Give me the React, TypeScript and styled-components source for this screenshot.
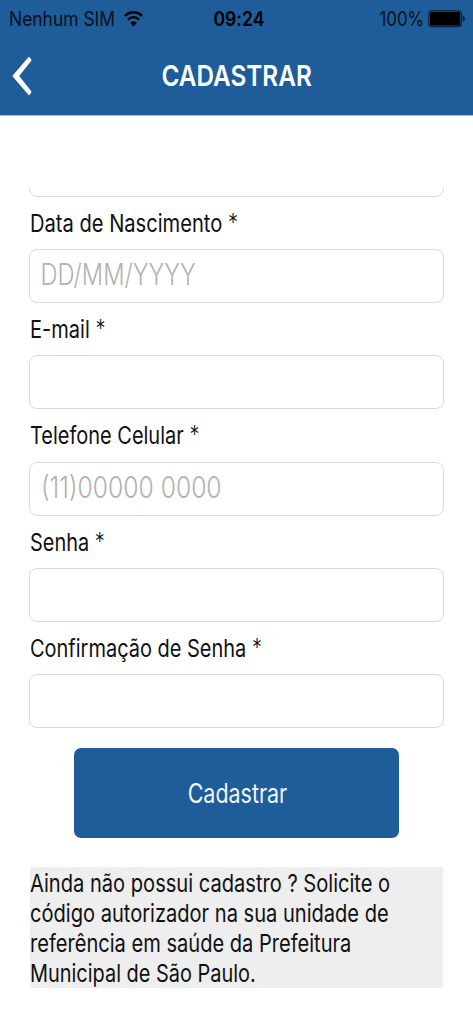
import React from "react";
import styled, { createGlobalStyle } from "styled-components";

const BLUE = "#1f5c9a";

const GlobalStyle = createGlobalStyle`
  * { box-sizing: border-box; }
  body {
    margin: 0;
    background: #fff;
    font-family: Inter, "Liberation Sans", sans-serif;
    font-feature-settings: "calt" 0;
    color: #111;
  }
`;

/* Narrow lettering: the face is condensed horizontally by $sx. */
const Narrow = styled.span<{ $sx: number; $from?: string }>`
  display: inline-block;
  white-space: nowrap;
  transform: scaleX(${(p) => p.$sx});
  transform-origin: ${(p) => p.$from ?? "left"} center;
`;

const Screen = styled.div`
  width: 473px;
  height: 1024px;
  overflow: hidden;
  display: flex;
  flex-direction: column;
  background: #fff;
`;

const Header = styled.header`
  flex: none;
  height: 116px;
  background: ${BLUE};
  border-bottom: 1px solid #b4bcc6;
`;

const StatusBar = styled.div`
  height: 38px;
  display: grid;
  grid-template-columns: 1fr auto 1fr;
  align-items: center;
  padding: 0 8px 0 9px;
  font-size: 20px;
  line-height: 38px;
  color: #05101c;
`;

const Carrier = styled.div`
  display: flex;
  align-items: center;
`;

const CarrierName = styled.div`
  width: 115px;
`;

const Clock = styled.div`
  display: flex;
  justify-content: center;
  width: 60px;
  padding-left: 4px;
  font-weight: 600;
  color: #000;
`;

const Power = styled.div`
  display: flex;
  align-items: center;
  justify-content: flex-end;
  gap: 4px;
`;

const TitleBar = styled.div`
  height: 77px;
  display: grid;
  grid-template-columns: 44px 1fr 44px;
  align-items: start;
  color: #fff;
`;

const BackButton = styled.button`
  height: 76px;
  padding: 0 0 0 11px;
  border: 0;
  background: none;
  display: flex;
  align-items: center;
`;

const Title = styled.h1`
  margin: 0;
  text-align: center;
  font-size: 29px;
  font-weight: 600;
  line-height: 76px;
`;

const Form = styled.form`
  margin: 72px 29px 0 29px;
  display: flex;
  flex-direction: column;
  overflow: hidden;
`;

const PreviousField = styled.div`
  flex: none;
  height: 8.7px;
  overflow: hidden;
  display: flex;
  align-items: flex-end;
`;

const Field = styled.div`
  flex: none;
  width: 100%;
  height: 54px;
  border: 1px solid #d9d9d9;
  border-radius: 8px;
  overflow: hidden;
`;

const Label = styled.label`
  flex: none;
  height: 52.3px;
  padding-left: 1px;
  font-size: 24.3px;
  line-height: 52.3px;
`;

const Required = styled.span`
  display: inline-block;
  line-height: 1;
  font-weight: 300;
  transform: translateY(-1px);
`;

const Input = styled.input<{ $sx: number }>`
  display: block;
  width: ${(p) => 100 / p.$sx}%;
  height: 50px;
  padding: 0 0 0 13px;
  border: 0;
  outline: 0;
  background: transparent;
  font-family: inherit;
  font-size: 29.3px;
  font-weight: 350;
  transform: scaleX(${(p) => p.$sx});
  transform-origin: left center;
  &::placeholder {
    color: #b2b2b2;
    opacity: 1;
  }
`;

const Submit = styled.button`
  flex: none;
  align-self: center;
  width: 325px;
  height: 90px;
  margin-top: 20px;
  padding: 0 0 0 1px;
  border: 0;
  border-radius: 7px;
  background: ${BLUE};
  color: #f2f7fc;
  font-family: inherit;
  font-size: 26.5px;
`;

const Note = styled.p`
  flex: none;
  margin: 29px 0 0 1px;
  width: 413px;
  height: 121px;
  padding-top: 1px;
  background: #eee;
  font-size: 24.3px;
  line-height: 30.1px;
`;

const NoteLine = styled.span`
  display: block;
  height: 30.1px;
`;

const fields = [
  { id: "nascimento", label: "Data de Nascimento", sx: 0.828, hint: "DD/MM/YYYY", hintSx: 0.808 },
  { id: "email", label: "E-mail", sx: 0.825 },
  { id: "celular", label: "Telefone Celular", sx: 0.822, hint: "(11)00000 0000", hintSx: 0.842 },
  { id: "senha", label: "Senha", sx: 0.82 },
  { id: "confirmacao", label: "Confirmação de Senha", sx: 0.822 },
];

const note = [
  { text: "Ainda não possui cadastro ? Solicite o", sx: 0.827 },
  { text: "código autorizador na sua unidade de", sx: 0.826 },
  { text: "referência em saúde da Prefeitura", sx: 0.826 },
  { text: "Municipal de São Paulo.", sx: 0.82 },
];

const WifiIcon = () => (
  <svg width="19" height="17" viewBox="0 0 19 17" fill="none" stroke="#000">
    <path d="M1 5C5.6 0 13.4 0 18 5" strokeWidth="2.4" />
    <path d="M4 8.6C7 5.4 12 5.4 15 8.6" strokeWidth="2.3" />
    <path d="M6.2 11.8C8.2 9.8 10.8 9.8 12.8 11.8L9.5 15.4Z" fill="#000" stroke="none" />
  </svg>
);

const BatteryIcon = () => (
  <svg width="37" height="18" viewBox="0 0 37 18">
    <rect x="0.8" y="0.8" width="32.6" height="15.8" rx="3" fill="none" stroke="#0b2340" strokeWidth="1.2" />
    <rect x="2" y="2" width="30.2" height="13.4" rx="1.5" fill="#000" />
    <path d="M34.6 5.6Q36.8 6.4 36.8 8.7T34.6 11.8Z" fill="#0b1c30" />
  </svg>
);

const BackIcon = () => (
  <svg width="22" height="40" viewBox="0 0 22 40" fill="#fff">
    <path d="M17.4 1.2Q18.2 .5 18.9 1.4L20.3 3.6Q20.7 4.4 20.1 5.1L8.2 20L20.1 34.9Q20.7 35.6 20.3 36.4L18.9 38.6Q18.2 39.5 17.4 38.8L1.7 20.6Q1.2 20 1.7 19.4Z" />
  </svg>
);

export default function App() {
  return (
    <>
      <GlobalStyle />
      <Screen>
        <Header>
          <StatusBar>
            <Carrier>
              <CarrierName>
                <Narrow $sx={0.872}>Nenhum SIM</Narrow>
              </CarrierName>
              <WifiIcon />
            </Carrier>
            <Clock>
              <Narrow $sx={0.88} $from="center">09:24</Narrow>
            </Clock>
            <Power>
              <Narrow $sx={0.84} $from="right">100%</Narrow>
              <BatteryIcon />
            </Power>
          </StatusBar>
          <TitleBar>
            <BackButton type="button" aria-label="Voltar">
              <BackIcon />
            </BackButton>
            <Title>
              <Narrow $sx={0.838} $from="center">CADASTRAR</Narrow>
            </Title>
          </TitleBar>
        </Header>
        <Form>
          <PreviousField>
            <Field />
          </PreviousField>
          {fields.map((f) => (
            <React.Fragment key={f.id}>
              <Label htmlFor={f.id}>
                <Narrow $sx={f.sx}>
                  {f.label} <Required>*</Required>
                </Narrow>
              </Label>
              <Field>
                <Input id={f.id} $sx={f.hintSx ?? 0.83} placeholder={f.hint} />
              </Field>
            </React.Fragment>
          ))}
          <Submit type="button">
            <Narrow $sx={0.81} $from="center">Cadastrar</Narrow>
          </Submit>
          <Note>
            {note.map((l) => (
              <NoteLine key={l.text}>
                <Narrow $sx={l.sx}>{l.text}</Narrow>
              </NoteLine>
            ))}
          </Note>
        </Form>
      </Screen>
    </>
  );
}
